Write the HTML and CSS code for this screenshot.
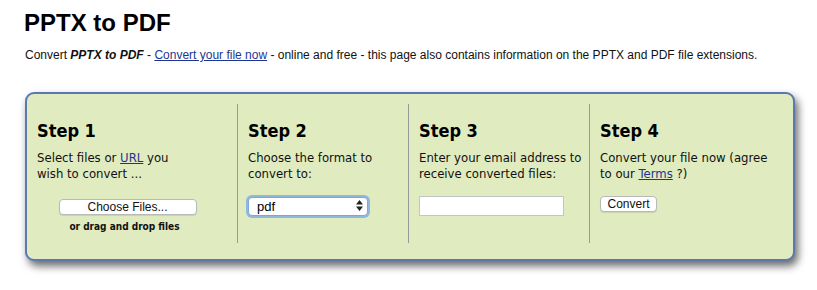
FILE: index.html
```html
<!DOCTYPE html>
<html lang="en">
<head>
    <meta charset="UTF-8">
    <meta name="viewport" content="width=device-width, initial-scale=1.0">
    <title>PPTX to PDF</title>
    <link rel="stylesheet" href="styles.css">
</head>
<body>
    <h1 class="page-title">PPTX to PDF</h1>
    <p class="intro">
        Convert <strong><em>PPTX to PDF</em></strong> - <a href="#">Convert your file now</a> - online and free - this page also contains information on the PPTX and PDF file extensions.
    </p>

    <div class="converter">
        <div class="step step-files">
            <h2>Step 1</h2>
            <p>Select files or <a href="#">URL</a> you<br>wish to convert ...</p>
            <div class="upload">
                <button class="btn-file">Choose Files...</button>
                <div class="drop-hint">or drag and drop files</div>
            </div>
        </div>

        <div class="step">
            <h2>Step 2</h2>
            <p>Choose the format to<br>convert to:</p>
            <div class="select-wrap">
                <select class="format-select">
                    <option>pdf</option>
                </select>
                <svg class="select-arrows" width="7" height="11" viewBox="0 0 7 11">
                    <path d="M3.5 0 L7 4.5 H0 Z M3.5 11 L7 6.5 H0 Z" fill="#222"/>
                </svg>
            </div>
        </div>

        <div class="step">
            <h2>Step 3</h2>
            <p>Enter your email address to<br>receive converted files:</p>
            <input class="email-input" type="text">
        </div>

        <div class="step">
            <h2>Step 4</h2>
            <p>Convert your file now (agree<br>to our <a href="#">Terms</a> ?)</p>
            <button class="btn-convert">Convert</button>
        </div>
    </div>
</body>
</html>
```

FILE: styles.css
```css
* {
    margin: 0;
    padding: 0;
    box-sizing: border-box;
}

html,
body {
    background: #fff;
}

body {
    font-family: 'Liberation Sans', Arial, sans-serif;
    color: #111;
    min-height: 290px;
    padding: 0 22px 30px 24px;
}

a {
    color: #1f3594;
}

.page-title {
    font-size: 24px;
    line-height: 30px;
    font-weight: bold;
    margin-top: 8px;
    color: #000;
}

.intro {
    font-size: 12px;
    line-height: 16px;
    margin-top: 9px;
    margin-left: 1px;
}

.converter {
    margin-top: 29px;
    margin-left: 1px;
    width: 770px;
    height: 169px;
    background: #e0ebbf;
    border: 2px solid #5a79b3;
    border-radius: 9px;
    box-shadow: 3px 5px 9px rgba(0, 0, 0, 0.6);
    padding-top: 10px;
    display: grid;
    grid-template-columns: 210px 171px 181px 1fr;
    font-family: 'DejaVu Sans Condensed', 'DejaVu Sans', sans-serif;
}

.step {
    height: 139px;
    padding: 16px 10px 0 10px;
    border-left: 1px solid #999;
}

.step:first-child {
    border-left: none;
}

.step h2 {
    font-size: 18px;
    line-height: 22px;
    font-weight: bold;
    color: #000;
}

.step p {
    font-size: 13px;
    line-height: 16px;
    margin-top: 8px;
    color: #111;
    white-space: nowrap;
}

.upload {
    width: 180px;
    margin-top: 14px;
    text-align: center;
}

button {
    font-family: 'Liberation Sans', Arial, sans-serif;
    font-size: 12px;
    height: 16px;
    line-height: 14px;
    background: #fff;
    border: 1px solid #b9b9b9;
    border-radius: 4px;
    color: #111;
    box-shadow: 0 1px 1px rgba(0, 0, 0, 0.1);
}

.btn-file {
    width: 138px;
    margin-left: 1px;
}

.drop-hint {
    font-size: 10px;
    font-weight: bold;
    line-height: 14px;
    margin-top: 5px;
    margin-left: -5px;
}

.select-wrap {
    position: relative;
    width: 120px;
    height: 19px;
    margin-top: 14px;
}

.format-select {
    appearance: none;
    -webkit-appearance: none;
    width: 120px;
    height: 19px;
    border: 1px solid #7ea6dc;
    border-radius: 4px;
    box-shadow: 0 0 0 2px rgba(120, 165, 230, 0.75);
    background: #fff;
    font-family: 'Liberation Sans', Arial, sans-serif;
    font-size: 13px;
    padding-left: 8px;
    color: #000;
    outline: none;
}

.select-arrows {
    position: absolute;
    right: 5px;
    top: 4px;
}

.email-input {
    display: block;
    width: 145px;
    height: 20px;
    margin-top: 14px;
    border: 1px solid #c4c4c4;
    background: #fff;
    outline: none;
}

.btn-convert {
    display: block;
    width: 57px;
    margin-top: 14px;
}
```
